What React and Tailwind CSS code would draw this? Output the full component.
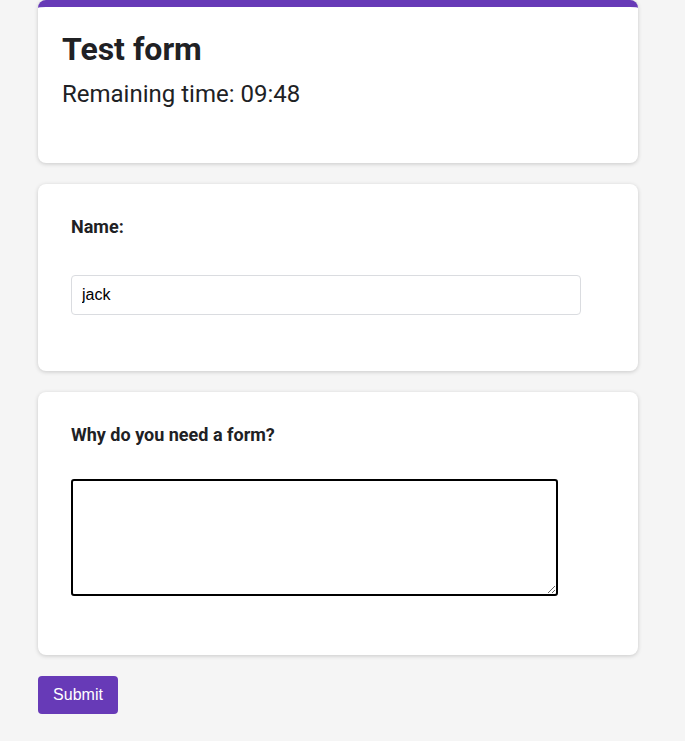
export default function App() {
  return (
    <div className="min-h-screen bg-[#f5f5f5] pb-6" style={{ fontFamily: "Roboto, 'Liberation Sans', sans-serif" }}>
      <div className="ml-[38px] flex w-[600px] flex-col gap-[21px]">
        {/* header card */}
        <div className="rounded-lg border-t-[7px] border-[#673ab7] bg-white px-6 pt-[23px] pb-[54px] shadow-[0_1px_4px_rgba(0,0,0,0.18)]">
          <h1 className="text-[32px] font-bold leading-[1.2] text-[#202124]">Test form</h1>
          <p className="mt-3 text-[24px] leading-[1.2] text-[#202124]">Remaining time: 09:48</p>
        </div>

        <div className="rounded-lg bg-white pl-[33px] pt-8 pb-14 shadow-[0_1px_4px_rgba(0,0,0,0.18)]">
          <label className="block text-[18px] font-bold leading-[1.2] text-[#202124]">Name:</label>
          <input
            defaultValue="jack"
            className="mt-[37px] block h-10 w-[510px] rounded border border-[#dadce0] px-[10px] text-base text-black outline-none"
            style={{ fontFamily: "'Liberation Sans', Arial, sans-serif" }}
          />
        </div>

        <div className="rounded-lg bg-white pl-[33px] pt-8 pb-[59px] shadow-[0_1px_4px_rgba(0,0,0,0.18)]">
          <label className="block text-[18px] font-bold leading-[1.2] text-[#202124]">Why do you need a form?</label>
          <textarea className="mt-[34px] block h-[117px] w-[487px] rounded-[3px] border-2 border-black outline-none" />
        </div>
      </div>
      <button
        className="ml-[38px] mt-[21px] h-[38px] w-20 rounded bg-[#673ab7] text-base text-white"
        style={{ fontFamily: "'Liberation Sans', Arial, sans-serif" }}
      >
        Submit
      </button>
    </div>
  );
}
